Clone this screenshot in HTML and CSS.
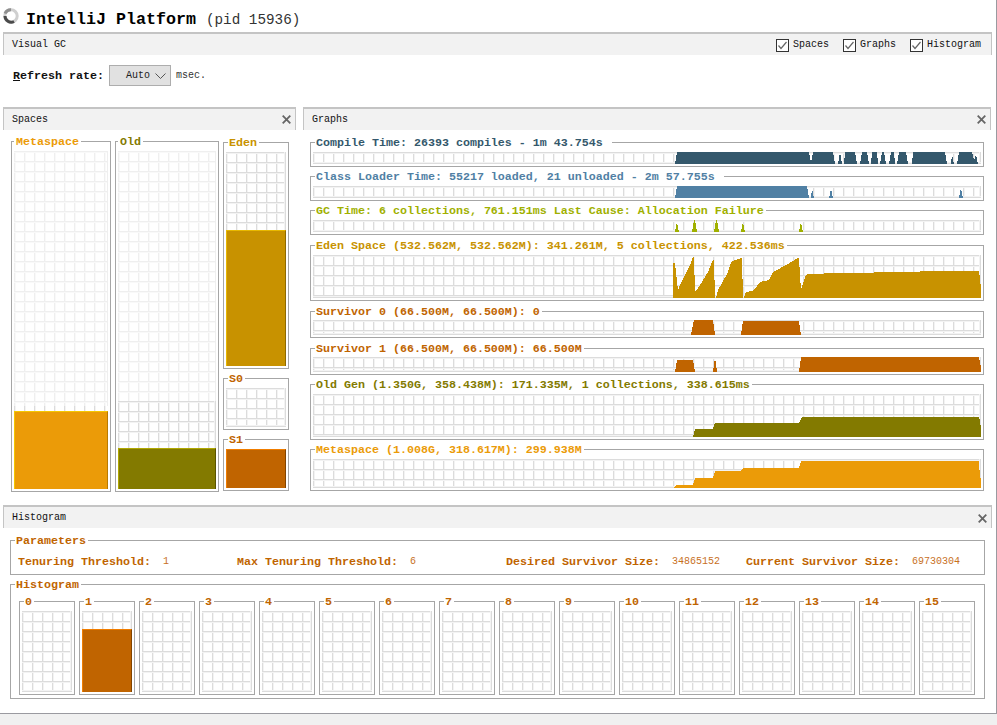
FILE: index.html
```html
<!DOCTYPE html>
<html lang="en">
<head>
<meta charset="utf-8">
<title>IntelliJ Platform (pid 15936)</title>
<link rel="stylesheet" href="styles.css">
</head>
<body>
<main class="frame">
  <h1 class="title">
    <svg class="spinner" width="18" height="18" viewBox="0 0 18 18"><circle cx="9" cy="9" r="6.2" fill="none" stroke="#cfcfcf" stroke-width="3"/><path d="M3 6.5A6.2 6.2 0 0 1 9 2.8" fill="none" stroke="#8f8f8f" stroke-width="3"/><path d="M3 9A6.2 6.2 0 0 0 12 14.5" fill="none" stroke="#4a4a4a" stroke-width="3"/></svg>
    <b class="title-name">IntelliJ Platform</b><span class="title-pid">(pid 15936)</span>
  </h1>

  <header class="bar">
    <span>Visual GC</span>
    <div class="checks">
      <label class="check"><svg width="13" height="13" viewBox="0 0 13 13"><rect x=".5" y=".5" width="12" height="12" fill="#fff" stroke="#333"/><path d="M2.5 6.5 5 9.5 10.5 3" fill="none" stroke="#666" stroke-width="1.2"/></svg>Spaces</label>
      <label class="check"><svg width="13" height="13" viewBox="0 0 13 13"><rect x=".5" y=".5" width="12" height="12" fill="#fff" stroke="#333"/><path d="M2.5 6.5 5 9.5 10.5 3" fill="none" stroke="#666" stroke-width="1.2"/></svg>Graphs</label>
      <label class="check"><svg width="13" height="13" viewBox="0 0 13 13"><rect x=".5" y=".5" width="12" height="12" fill="#fff" stroke="#333"/><path d="M2.5 6.5 5 9.5 10.5 3" fill="none" stroke="#666" stroke-width="1.2"/></svg>Histogram</label>
    </div>
  </header>

  <div class="refresh">
    <b class="refresh-label"><u>R</u>efresh rate:</b>
    <div class="combo"><span>Auto</span><svg width="11" height="6" viewBox="0 0 11 6"><path d="M.5.5 5.5 5.5 10.5.5" fill="none" stroke="#555"/></svg></div>
    <span class="unit">msec.</span>
  </div>

  <div class="columns">
    <section class="panel panel-spaces">
      <header class="bar"><span>Spaces</span><svg class="close" width="9" height="9" viewBox="0 0 9 9"><path d="M.7.7 8.3 8.3M8.3.7.7 8.3" stroke="#666" stroke-width="1.8"/></svg></header>
      <div class="spaces">
        <fieldset class="box tight c-meta w-meta"><legend>Metaspace</legend>
          <div class="plot tall">
            <div class="grid faint" style="height:255px"></div>
            <div class="grid ticks" style="height:5px"></div>
            <div class="fill fill-meta" style="height:78px"></div>
          </div>
        </fieldset>
        <fieldset class="box tight c-old w-old"><legend>Old</legend>
          <div class="plot tall">
            <div class="grid faint" style="height:250px"></div>
            <div class="grid" style="height:47px"></div>
            <div class="fill fill-old" style="height:41px"></div>
          </div>
        </fieldset>
        <div class="young">
          <fieldset class="box c-eden"><legend>Eden</legend>
            <div class="plot eden">
              <div class="grid" style="height:78px"></div>
              <div class="fill fill-eden" style="height:136px"></div>
            </div>
          </fieldset>
          <fieldset class="box c-surv"><legend>S0</legend>
            <div class="plot surv grid base"></div>
          </fieldset>
          <fieldset class="box c-surv"><legend>S1</legend>
            <div class="plot surv">
              <div class="fill fill-surv" style="height:39px"></div>
            </div>
          </fieldset>
        </div>
      </div>
    </section>

    <section class="panel panel-graphs">
      <header class="bar"><span>Graphs</span><svg class="close" width="9" height="9" viewBox="0 0 9 9"><path d="M.7.7 8.3 8.3M8.3.7.7 8.3" stroke="#666" stroke-width="1.8"/></svg></header>
      <div class="graphs">
        <fieldset class="box c-compile"><legend class="extra">Compile Time: 26393 compiles - 1m 43.754s</legend>
          <div class="plot grid base" style="height:12px"><svg viewBox="313 152 668 12"><path fill="#34586c" d="M675 164 677 152H809L811 163 813 152H833L835 164H838L840 152 842 164H844L845 152H855L857 164H860L862 152H867L869 164H871L872 152H877L878 164H880L882 152H884L886 164H889L891 152H894L895 164H897L899 152H906L908 164H912L913 152H945L947 164H951L952 155 954 164H957L959 152H972L974 160 976 155 978 164Z"/></svg></div>
        </fieldset>
        <fieldset class="box c-class"><legend class="extra">Class Loader Time: 55217 loaded, 21 unloaded - 2m 57.755s</legend>
          <div class="plot grid base" style="height:12px"><svg viewBox="313 186 668 12"><path fill="#5080a4" d="M675 198 677 186H807L809 198ZM811 198 812 189 814 198ZM829 198 831 189 833 198ZM959 198 961 188 963 198Z"/></svg></div>
        </fieldset>
        <fieldset class="box c-gc"><legend>GC Time: 6 collections, 761.151ms Last Cause: Allocation Failure</legend>
          <div class="plot grid base" style="height:12px"><svg viewBox="313 220 668 12"><path fill="#a0b000" d="M675 232 677 222 679 232ZM692 232 694 220H695L697 232ZM714 232 716 220H717L719 232ZM741 232 743 222 745 232ZM799 232 801 222 803 232Z"/></svg></div>
        </fieldset>
        <fieldset class="box c-eden spaced"><legend>Eden Space (532.562M, 532.562M): 341.261M, 5 collections, 422.536ms</legend>
          <div class="plot grid base" style="height:43px"><svg viewBox="313 255 668 43"><path fill="#c89200" d="M673 298V263H675L676 273 678 290 680 285 686 273 690 265 693 257H694L695 291H696L702 282 708 272 712 262 713 260H714L715 298H716L718 290 722 283 728 272 731 262 735 260 741 258H742L743 298H744L746 292 752 291 754 290 760 282 769 280 773 272 788 264 798 258H799L800 275 801 290 805 277 807 274 841 273 907 272 933 271H979L981 288V298Z"/></svg></div>
        </fieldset>
        <fieldset class="box c-surv spaced"><legend>Survivor 0 (66.500M, 66.500M): 0</legend>
          <div class="plot snug grid base" style="height:15px"><svg viewBox="313 320 668 15"><path fill="#c06400" d="M691 335 694 320H713L715 335ZM741 335 743 321H799L801 335Z"/></svg></div>
        </fieldset>
        <fieldset class="box c-surv spaced"><legend>Survivor 1 (66.500M, 66.500M): 66.500M</legend>
          <div class="plot snug grid base" style="height:15px"><svg viewBox="313 357 668 15"><path fill="#c06400" d="M675 372 677 360H693L695 372ZM713 372 715 357 717 372ZM799 372 801 357H979L981 367V372Z"/></svg></div>
        </fieldset>
        <fieldset class="box c-old"><legend>Old Gen (1.350G, 358.438M): 171.335M, 1 collections, 338.615ms</legend>
          <div class="plot grid base" style="height:43px"><svg viewBox="313 394 668 43"><path fill="#837a00" d="M693 437 695 429H713L715 423H799L802 417H979L980 420 981 430V437Z"/></svg></div>
        </fieldset>
        <fieldset class="box c-meta"><legend>Metaspace (1.008G, 318.617M): 299.938M</legend>
          <div class="plot grid base" style="height:29px"><svg viewBox="313 459 668 29"><path fill="#eb9b08" d="M673 488 677 485H693L695 478H713L715 471H741L743 468H799L801 461H979L980 478H981V488Z"/></svg></div>
        </fieldset>
      </div>
    </section>
  </div>

  <section class="panel">
    <header class="bar bar-low"><span>Histogram</span><svg class="close" width="9" height="9" viewBox="0 0 9 9"><path d="M.7.7 8.3 8.3M8.3.7.7 8.3" stroke="#666" stroke-width="1.8"/></svg></header>
    <div class="hist-body">
      <fieldset class="box c-surv"><legend>Parameters</legend>
        <div class="param-row">
          <div class="param p1"><b>Tenuring Threshold:</b><span>1</span></div>
          <div class="param p2"><b>Max Tenuring Threshold:</b><span>6</span></div>
          <div class="param p3"><b>Desired Survivor Size:</b><span>34865152</span></div>
          <div class="param"><b>Current Survivor Size:</b><span>69730304</span></div>
        </div>
      </fieldset>
      <fieldset class="box c-surv"><legend>Histogram</legend>
        <div class="buckets">
          <fieldset class="box c-surv"><legend>0</legend><div class="plot bucket grid base"></div></fieldset>
          <fieldset class="box c-surv"><legend>1</legend><div class="plot bucket"><div class="grid" style="height:18px"></div><div class="fill fill-surv" style="height:63px"></div></div></fieldset>
          <fieldset class="box c-surv"><legend>2</legend><div class="plot bucket grid base"></div></fieldset>
          <fieldset class="box c-surv"><legend>3</legend><div class="plot bucket grid base"></div></fieldset>
          <fieldset class="box c-surv"><legend>4</legend><div class="plot bucket grid base"></div></fieldset>
          <fieldset class="box c-surv"><legend>5</legend><div class="plot bucket grid base"></div></fieldset>
          <fieldset class="box c-surv"><legend>6</legend><div class="plot bucket grid base"></div></fieldset>
          <fieldset class="box c-surv"><legend>7</legend><div class="plot bucket grid base"></div></fieldset>
          <fieldset class="box c-surv"><legend>8</legend><div class="plot bucket grid base"></div></fieldset>
          <fieldset class="box c-surv"><legend>9</legend><div class="plot bucket grid base"></div></fieldset>
          <fieldset class="box c-surv"><legend>10</legend><div class="plot bucket grid base"></div></fieldset>
          <fieldset class="box c-surv"><legend>11</legend><div class="plot bucket grid base"></div></fieldset>
          <fieldset class="box c-surv"><legend>12</legend><div class="plot bucket grid base"></div></fieldset>
          <fieldset class="box c-surv"><legend>13</legend><div class="plot bucket grid base"></div></fieldset>
          <fieldset class="box c-surv"><legend>14</legend><div class="plot bucket grid base"></div></fieldset>
          <fieldset class="box c-surv"><legend>15</legend><div class="plot bucket grid base"></div></fieldset>
        </div>
      </fieldset>
    </div>
  </section>
</main>
</body>
</html>
```
FILE: styles.css
```css
* { box-sizing: border-box; }
html, body { margin: 0; height: 100%; }
body {
  background: #f0f0f0;
  color: #222;
  font: 10px/14px "Liberation Mono", monospace;
  overflow: hidden;
}
.frame {
  display: flex;
  flex-direction: column;
  height: 714px;
  padding: 0 4px 0 3px;
  background: #fff;
  border-right: 1px solid #9a9aa0;
  border-bottom: 1px solid #9a9aa0;
}
.title {
  display: flex;
  align-items: center;
  height: 32px;
  margin: 0;
  font-size: 14.3px;
  font-weight: 400;
  color: #333;
}
.spinner { flex: none; margin: 0 6px 0 -1px; }
.title-name { font-size: 16.67px; color: #000; margin: 7px 10px 0 0; }
.title-pid { margin-top: 7px; }
.bar {
  display: flex;
  align-items: center;
  justify-content: space-between;
  height: 23px;
  padding: 0 5px 0 8px;
  background: #f2f2f2;
  border: 1px solid #c4c4c4;
  border-top-width: 2px;
  border-bottom: 0;
  color: #111;
  flex: none;
}
.bar-low { padding-top: 1px; }
.checks { display: flex; gap: 14px; padding-right: 5px; }
.check { display: flex; align-items: center; gap: 4px; padding-top: 1px; }
.refresh {
  display: flex;
  align-items: center;
  height: 52px;
  padding: 0 0 11px 10px;
  flex: none;
}
.refresh-label { font-size: 11.67px; color: #111; margin-right: 5px; }
.combo {
  display: flex;
  align-items: center;
  justify-content: space-between;
  width: 62px;
  height: 21px;
  margin-right: 5px;
  padding: 0 4px 0 16px;
  background: #e1e1e1;
  border: 1px solid #adadad;
}
.unit { color: #333; }
.columns { display: flex; gap: 7px; height: 398px; flex: none; }
.panel { display: flex; flex-direction: column; }
.panel-spaces { width: 293px; }
.panel-graphs { width: 688px; }
.close { flex: none; margin-right: -1px; }
.box {
  margin: 0;
  padding: 0 2px 2px;
  min-width: 0;
  border: 1px solid #a6a6a6;
  display: block;
}
.box > legend {
  margin-left: 2px;
  padding: 0 2px 0 1px;
  height: 14px;
  font-weight: 700;
  font-size: 11.67px;
  line-height: 16px;
}
.box > legend.extra { padding-right: 9px; }
.tight > legend { margin-left: 0; padding-left: 2px; }
.c-meta > legend { color: #eb9b08; }
.c-old > legend { color: #837a00; }
.c-eden > legend { color: #c89200; }
.c-surv > legend { color: #c06400; }
.c-compile > legend { color: #34586c; }
.c-class > legend { color: #5080a4; }
.c-gc > legend { color: #a0b000; }
.plot {
  display: flex;
  flex-direction: column;
  margin-top: 3px;
}
.plot.snug { margin-top: 2px; }
.plot svg { display: block; width: 100%; height: 100%; shape-rendering: crispEdges; }
.grid {
  flex: none;
  background-color: #fff;
  background-image:
    linear-gradient(to left, #dcdcdc 1px, #f3f3f3 1px, #f3f3f3 2px, transparent 2px),
    linear-gradient(#dcdcdc 1px, #f3f3f3 1px, #f3f3f3 2px, transparent 2px),
    linear-gradient(90deg, #dcdcdc 1px, #f3f3f3 1px, #f3f3f3 2px, transparent 2px);
  background-size: 100% 100%, 10px 10px, 10px 10px;
}
.base {
  background-image:
    linear-gradient(to top, #dcdcdc 1px, #f3f3f3 1px, #f3f3f3 2px, transparent 2px),
    linear-gradient(to left, #dcdcdc 1px, #f3f3f3 1px, #f3f3f3 2px, transparent 2px),
    linear-gradient(#dcdcdc 1px, #f3f3f3 1px, #f3f3f3 2px, transparent 2px),
    linear-gradient(90deg, #dcdcdc 1px, #f3f3f3 1px, #f3f3f3 2px, transparent 2px);
  background-size: 100% 100%, 100% 100%, 10px 10px, 10px 10px;
}
.faint {
  background-image:
    linear-gradient(to left, #efefef 1px, transparent 1px),
    linear-gradient(#efefef 1px, #f9f9f9 1px, #f9f9f9 2px, transparent 2px),
    linear-gradient(90deg, #efefef 1px, #f9f9f9 1px, #f9f9f9 2px, transparent 2px);
}
.ticks {
  background-image: linear-gradient(90deg, #dcdcdc 1px, #f3f3f3 1px, #f3f3f3 2px, transparent 2px);
  background-size: 10px 10px;
}
.fill { flex: none; border: 1px solid; border-bottom: 0; }
.fill-meta { background: #eb9b08; border-color: #f5c800 #b87a00 #eb9b08 #f5c800; }
.fill-old { background: #837a00; border-color: #b0a800 #5a5400 #837a00 #b0a800; }
.fill-eden { background: #c89200; border-color: #e8b800 #8f6a00 #c89200 #e8b800; }
.fill-surv { background: #c06400; border-color: #f07d00 #824400 #c06400 #f07d00; }
.spaces {
  display: flex;
  align-items: flex-start;
  gap: 4px;
  padding: 4px 0 0 8px;
  flex: 1;
  min-height: 0;
}
.w-meta { width: 100px; }
.w-old { width: 104px; }
.tall { height: 338px; }
.young {
  display: flex;
  flex-direction: column;
  gap: 2px;
  width: 66px;
  margin-top: 1px;
}
.eden { height: 214px; }
.surv { height: 39px; }
.graphs {
  display: flex;
  flex-direction: column;
  gap: 2px;
  margin: 5px 7px 0;
}
.graphs > .spaced { margin-top: 1px; }
.hist-body {
  display: flex;
  flex-direction: column;
  gap: 2px;
  padding: 5px 7px 0;
}
.param-row { display: flex; height: 20px; align-items: center; margin: 5px 0 0; padding-left: 5px; }
.param { display: flex; flex: none; }
.param b { font-size: 11.67px; color: #c06400; }
.param span { color: #c8701e; margin-left: 12px; }
.p1 { width: 219px; }
.p2 { width: 269px; }
.p3 { width: 240px; }
.buckets {
  display: flex;
  gap: 4px;
  padding: 3px 6px 1px 6px;
}
.buckets .box { width: 56px; flex: none; }
.bucket { height: 81px; }
```
